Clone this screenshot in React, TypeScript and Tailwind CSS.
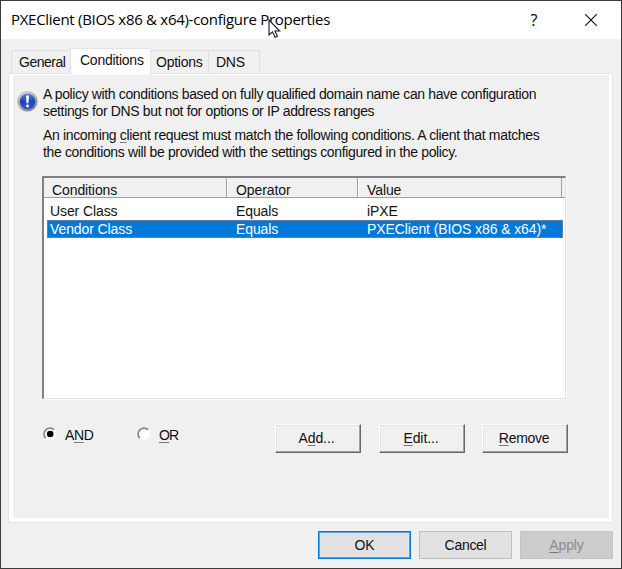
import type { ReactNode } from "react";

function Key({ children }: { children: ReactNode }) {
  return <span className="underline decoration-[#777] decoration-1 underline-offset-2">{children}</span>;
}

function InfoIcon() {
  return (
    <svg width="21" height="21" viewBox="0 0 20 20" className="block">
      <defs>
        <linearGradient id="rim" x1="0" y1="0" x2="0.6" y2="1">
          <stop offset="0" stopColor="#e3e4e6" />
          <stop offset="1" stopColor="#7d7f84" />
        </linearGradient>
        <linearGradient id="ball" x1="0" y1="0" x2="0" y2="1">
          <stop offset="0" stopColor="#5a7bd4" />
          <stop offset="0.5" stopColor="#1f43b8" />
          <stop offset="1" stopColor="#2b55cf" />
        </linearGradient>
      </defs>
      <circle cx="10" cy="10" r="9.4" fill="url(#rim)" stroke="#a5a7aa" strokeWidth="0.6" />
      <circle cx="10" cy="10" r="7.4" fill="url(#ball)" />
      <path d="M8.6 4.2h2.8l-.5 7.4H9.1z" fill="#fff" />
      <circle cx="10" cy="14.2" r="1.4" fill="#fff" />
    </svg>
  );
}

function Radio({ checked }: { checked?: boolean }) {
  return (
    <svg width="14" height="14" viewBox="0 0 14 14" className="block">
      <circle cx="7" cy="7" r="5.5" fill="#fff" />
      <path d="M2.8 11.2A5.9 5.9 0 0 1 11.2 2.8" fill="none" stroke="#858585" strokeWidth="1.7" />
      <path d="M11.2 2.8A5.9 5.9 0 0 1 2.8 11.2" fill="none" stroke="#fafafa" strokeWidth="1.5" />
      {checked && <circle cx="7.2" cy="7" r="3.3" fill="#000" />}
    </svg>
  );
}

function ClassicButton({ children, className }: { children: ReactNode; className: string }) {
  return (
    <button
      className={`h-[29px] border border-t-white border-l-white border-r-[#696969] border-b-[#696969] bg-[#f0f0f0] shadow-[inset_-1px_-1px_0_#a0a0a0,inset_1px_1px_0_#e3e3e3] ${className}`}
    >
      {children}
    </button>
  );
}

export default function App() {
  return (
    <div className="relative flex h-[569px] w-[622px] flex-col border border-[#3c3c3c] bg-[#f0f0f0] font-['Liberation_Sans',Arial,sans-serif] text-[14px] leading-[17px] tracking-[-0.1px] whitespace-nowrap text-[#111]">
      <header className="flex h-[38px] shrink-0 items-center bg-white pl-[10px] text-black">
        <h1 className="w-[512px] pb-[2px] font-['Open_Sans','Noto_Sans',sans-serif] text-[15px] leading-5 tracking-[-0.29px]">
          PXEClient (BIOS x86 &amp; x64)-configure Properties
        </h1>
        <span className="w-[22px] text-center font-['Open_Sans',sans-serif] text-[16px]">?</span>
        <svg width="14" height="14" viewBox="0 0 14 14" className="ml-[39px]">
          <path d="M1.2 1.2 12.8 12.8M12.8 1.2 1.2 12.8" stroke="#111" strokeWidth="1.2" />
        </svg>
      </header>

      <nav className="flex h-[34px] shrink-0 items-end pl-[10px] tracking-[-0.25px]">
        <div className="h-[23px] w-[59px] border border-r-0 border-b-0 border-[#dedede] pt-[3px] pl-[7px] tracking-[-0.5px]">General</div>
        <div className="z-10 -mb-[2px] h-[27px] w-[81px] border border-b-0 border-[#e4e4e4] bg-white pt-[3px] pl-[9px]">Conditions</div>
        <div className="h-[23px] w-[58px] border border-l-0 border-b-0 border-[#dedede] pt-[3px] pl-[5px]">Options</div>
        <div className="h-[23px] w-[51px] border border-l-0 border-b-0 border-[#dedede] pt-[3px] pl-[7px]">DNS</div>
      </nav>

      <main className="mx-[7px] h-[450px] w-[605px] shrink-0 border border-[#e4e4e4] bg-white pt-px pr-[3px] pb-[4px] pl-[4px]">
        <div className="h-full bg-[#f0f0f0]">
          <div className="flex pt-[11px]">
            <div className="w-[30px] pt-[5px] pl-[4px]">
              <InfoIcon />
            </div>
            <div className="leading-[16.5px]">
              <p className="tracking-[-0.365px]">
                A policy with conditions based on fully qualified domain name can have configuration
              </p>
              <p className="tracking-[-0.355px]">settings for DNS but not for options or IP address ranges</p>
              <p className="mt-[8px] tracking-[-0.34px]">
                An incoming <Key>c</Key>lient request must match the following conditions. A client that matches
              </p>
              <p className="tracking-[-0.355px]">
                the conditions will be provided with the settings configured in the policy.
              </p>
            </div>
          </div>

          <section className="mt-[16px] ml-[29px] h-[223px] w-[524px] border-t-2 border-r border-b border-l-2 border-t-[#808080] border-r-[#e0e0e0] border-b-[#e0e0e0] border-l-[#808080] bg-white shadow-[1px_1px_0_#fafafa]">
            <div className="flex h-[20px] border-b border-[#a0a0a0] bg-[#f0f0f0]">
              <div className="w-[183px] border-r border-[#a0a0a0] pt-[4px] pl-[8px]">Conditions</div>
              <div className="w-[131px] border-r border-l border-[#a0a0a0] border-l-white pt-[4px] pl-[8px]">Operator</div>
              <div className="w-[204px] border-r border-l border-[#a0a0a0] border-l-white pt-[4px] pl-[8px]">Value</div>
            </div>
            <div className="mt-[4px] flex h-[18px] pl-[6px] leading-[18px]">
              <span className="w-[186px]">User Class</span>
              <span className="w-[131px]">Equals</span>
              <span>iPXE</span>
            </div>
            <div className="ml-[3px] flex h-[18px] w-[516px] border border-[#5f7f9c] bg-[#0078d7] pl-[2px] leading-[16px] text-white">
              <span className="w-[186px]">Vendor Class</span>
              <span className="w-[131px]">Equals</span>
              <span>PXEClient (BIOS x86 &amp; x64)*</span>
            </div>
          </section>

          <div className="mt-[25px] flex pl-[30px]">
            <label className="flex h-[20px] w-[94px] items-center gap-[8px] tracking-[-0.4px]">
              <Radio checked />
              <span className="pt-[2px]">A<Key>N</Key>D</span>
            </label>
            <label className="flex h-[20px] w-[138px] items-center gap-[8px] tracking-[-0.8px]">
              <Radio />
              <span className="pt-[2px]"><Key>O</Key>R</span>
            </label>
            <ClassicButton className="w-[86px] pr-[3px]">A<Key>d</Key>d...</ClassicButton>
            <ClassicButton className="ml-[18px] w-[86px] pr-[2px]"><Key>E</Key>dit...</ClassicButton>
            <ClassicButton className="ml-[17px] w-[86px] pr-[2px] tracking-[-0.3px]"><Key>R</Key>emove</ClassicButton>
          </div>
        </div>
      </main>

      <footer className="mt-[8px] flex gap-[8px] pl-[317px]">
        <button className="h-[28px] w-[93px] border border-[#0078d7] bg-[#e1e1e1] shadow-[inset_0_0_0_1px_#5ba5de]">OK</button>
        <button className="h-[28px] w-[93px] border border-[#c0c0c0] bg-[#e1e1e1] tracking-[-0.3px]">Cancel</button>
        <button className="h-[28px] w-[93px] border border-[#c4c4c4] bg-[#cccccc] text-[#8d8d8d]"><Key>A</Key>pply</button>
      </footer>

      <svg width="13" height="20" viewBox="0 0 13 20" className="absolute top-[18px] left-[267px]">
        <path d="M1 1v15l3.5-3.2 2.5 5.4 2.4-1-2.4-5.2h4.8z" fill="#fff" stroke="#16162a" strokeWidth="1.1" />
      </svg>
    </div>
  );
}
